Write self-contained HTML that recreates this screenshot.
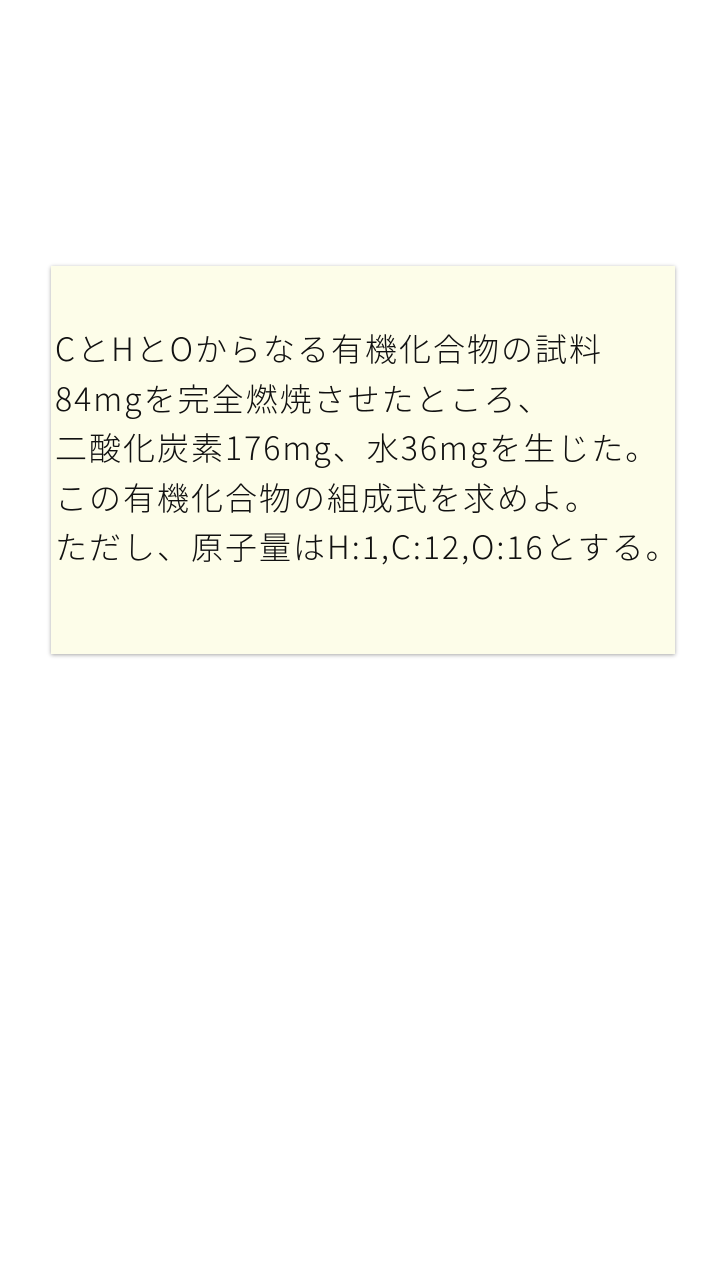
<!DOCTYPE html>
<html><head><meta charset="utf-8"><style>
html,body{margin:0;padding:0;background:#fff;width:720px;height:1280px;overflow:hidden}
.card{position:absolute;left:51px;top:266px;width:624px;height:388px;background:#fdfde9;box-shadow:0 1px 4px rgba(0,0,0,0.35)}
.t{position:absolute;left:4px;top:58px;font-family:"Noto Sans CJK JP",sans-serif;font-weight:300;font-size:32px;letter-spacing:2px;line-height:49.5px;color:#111;white-space:nowrap}
</style></head><body>
<div class="card"><div class="t">CとHとOからなる有機化合物の試料<br>84mgを完全燃焼させたところ、<br>二酸化炭素176mg、水36mgを生じた。<br>この有機化合物の組成式を求めよ。<br>ただし、原子量はH:1,C:12,O:16とする。</div></div>
</body></html>
